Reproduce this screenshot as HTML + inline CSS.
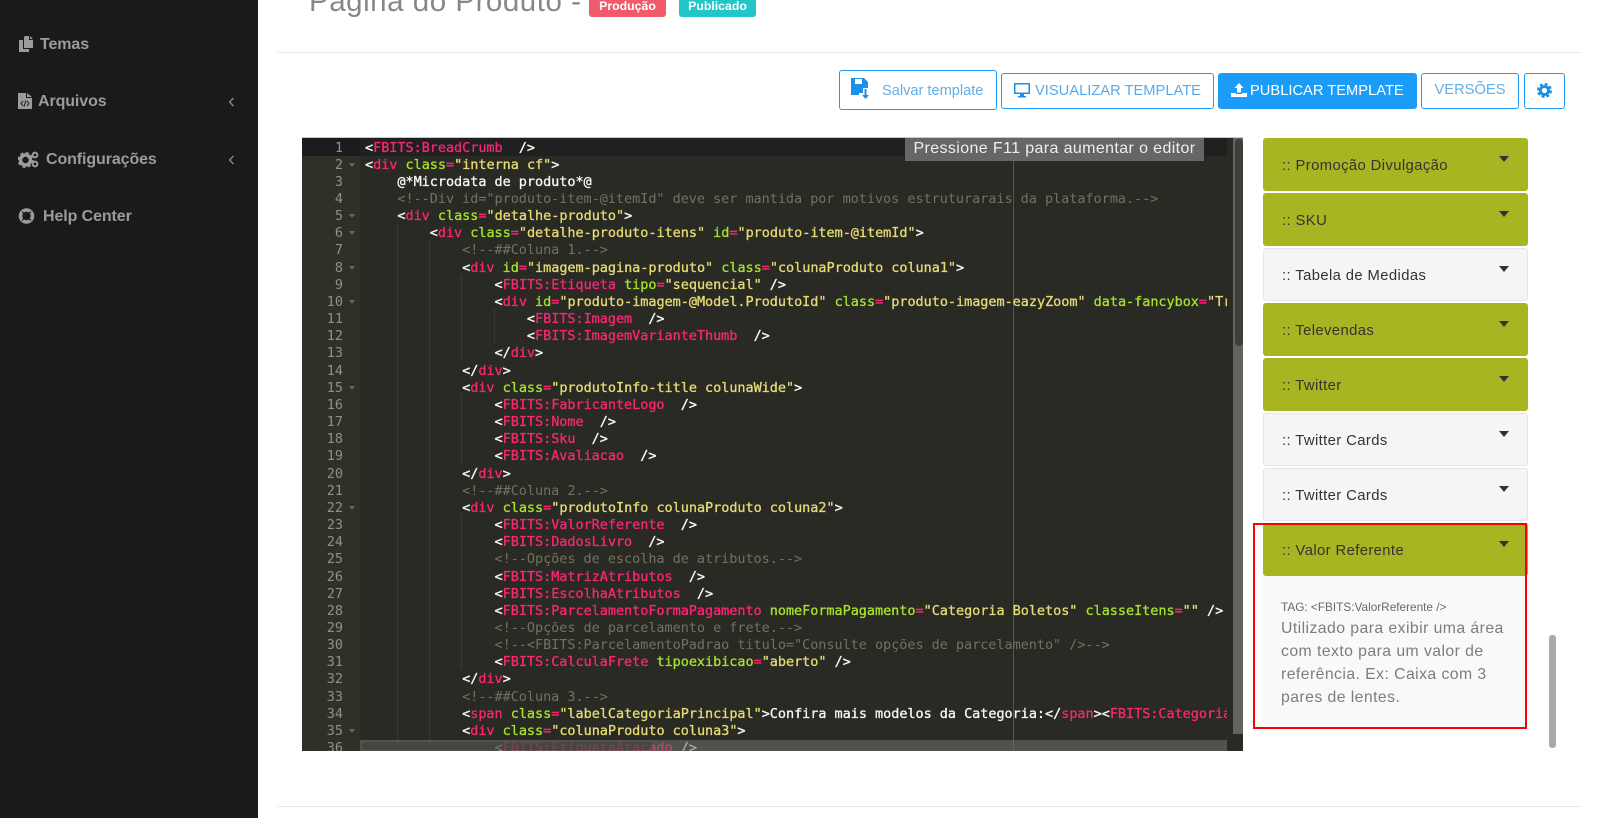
<!DOCTYPE html>
<html lang="pt-BR"><head><meta charset="utf-8"><title>Página do Produto</title>
<style>
*{box-sizing:border-box}
html,body{margin:0;width:1600px;height:818px;overflow:hidden;background:#fff;font-family:"Liberation Sans",sans-serif}
.a{position:absolute}
#side{left:0;top:0;width:258px;height:818px;background:#1a1a1a}
.nav{position:absolute;color:#9b9b9b;font:bold 16px/20px "Liberation Sans",sans-serif;letter-spacing:-.1px;white-space:nowrap}
.ic{position:absolute}
.hr{position:absolute;left:277px;width:1305px;height:1px;background:#e7eaec}
h1{position:absolute;margin:0;left:309px;top:-16px;font:300 29.5px/36px "Liberation Sans",sans-serif;color:#85888a;letter-spacing:.53px;white-space:nowrap}
.badge{position:absolute;top:-4px;height:21px;width:77px;border-radius:3px;color:#fff;font:bold 12.3px/20px "Liberation Sans",sans-serif;text-align:center}
.btn{position:absolute;border:1px solid #1c9cf6;border-radius:3px;color:#5aa9ea;background:#fff;font:14.7px/34px "Liberation Sans",sans-serif;white-space:nowrap}
#ed{left:302px;top:137px;width:941px;height:614px;background:#2a2a25;overflow:hidden;border-top:1px solid #c8c8c8}
#gut{left:0;top:0;width:58px;height:614px;background:#2f3129}
#act{left:0;top:0;width:925px;height:18px;background:#202020}
#actg{left:0;top:0;width:58px;height:18px;background:#1c1c1c}
.n{position:absolute;left:0;width:41px;margin-top:1.5px;text-align:right;color:#8f908a;font:13.5px/17.16px "DejaVu Sans Mono",monospace}
.f{position:absolute;left:47px;margin-top:1px;width:0;height:0;border-left:3.5px solid transparent;border-right:3.5px solid transparent;border-top:4px solid #66675f}
#code{left:63px;top:1.5px;width:862px;height:613px;overflow:hidden;font:13.5px/17.16px "DejaVu Sans Mono",monospace;letter-spacing:-.033px;color:#f8f8f2;-webkit-text-stroke:.3px currentColor}
.l{position:absolute;left:0;white-space:pre;height:17.16px}
.t{color:#f92672}.g{color:#a6e22e}.y{color:#e6db74}.c{color:#75715e;-webkit-text-stroke:0}.e{color:#f92672}
.gd{position:absolute;width:1px;border-left:1px dotted #45463f}
.p{position:absolute;left:1263px;width:265px;height:53px;border-radius:3px;font:14.8px/20px "Liberation Sans",sans-serif;letter-spacing:.4px;color:#333;white-space:nowrap}
.p span{position:absolute;left:19px;top:18px}
.p i{position:absolute;left:236px;top:18px;width:0;height:0;border-left:5px solid transparent;border-right:5px solid transparent;border-top:6px solid #333}
.o{background:#a8b522}
.w{background:#f5f5f5;border:1px solid #e5e6e7}
.w span{left:18px;top:17px}.w i{left:235px;top:17px}
</style></head><body>
<div id="side" class="a">
<svg class="ic" style="left:18px;top:36px" width="16" height="16" viewBox="0 0 16 16"><path fill="#9b9b9b" d="M7 0h4v4h4v8H6V1zM12 0l3 3h-3zM1 4h4v9h6v3H1z"/></svg>
<div class="nav" style="left:40px;top:35px">Temas</div>
<svg class="ic" style="left:18px;top:93px" width="14" height="16" viewBox="0 0 14 16"><path fill="#9b9b9b" d="M0 0h8v5h6v11H0zM9 0l5 4H9z"/><path fill="none" stroke="#1a1a1a" d="M5 8l-2 2.500 2 2.500M9 8l2 2.500-2 2.500M8 7.500l-2 6"/></svg>
<div class="nav" style="left:38px;top:92px">Arquivos</div>
<svg class="ic" style="left:228px;top:97px" width="7" height="10" viewBox="0 0 7 10"><path fill="none" stroke="#8a8a8a" stroke-width="1.300" d="M5.500 1L1.500 5l4 4"/></svg>
<svg class="ic" style="left:18px;top:151px" width="21" height="17" viewBox="0 0 21 17"><circle cx="7.500" cy="9" r="5" fill="none" stroke="#9b9b9b" stroke-width="3.500"/><circle cx="7.500" cy="9" r="7" fill="none" stroke="#9b9b9b" stroke-width="2" stroke-dasharray="3 2.500"/><circle cx="17" cy="4" r="2.400" fill="none" stroke="#9b9b9b" stroke-width="2"/><circle cx="17" cy="13" r="2.400" fill="none" stroke="#9b9b9b" stroke-width="2"/></svg>
<div class="nav" style="left:46px;top:150px">Configurações</div>
<svg class="ic" style="left:228px;top:155px" width="7" height="10" viewBox="0 0 7 10"><path fill="none" stroke="#8a8a8a" stroke-width="1.300" d="M5.500 1L1.500 5l4 4"/></svg>
<svg class="ic" style="left:18px;top:208px" width="17" height="16" viewBox="0 0 17 16"><circle cx="8.500" cy="8" r="6" fill="none" stroke="#9b9b9b" stroke-width="3.600"/><path stroke="#1a1a1a" stroke-width="1.200" d="M4 3.500l2.500 2.500M13 3.500L10.500 6M4 12.500L6.500 10M13 12.500L10.500 10"/></svg>
<div class="nav" style="left:43px;top:207px">Help Center</div>
</div>

<h1>Página do Produto -</h1>
<div class="badge" style="left:589px;background:#f05a6a">Produção</div>
<div class="badge" style="left:679px;background:#23c6c8">Publicado</div>
<div class="hr" style="top:52px"></div>
<div class="hr" style="top:806px"></div>

<div class="btn" style="left:839px;top:70px;width:158px;height:40px;font-size:14.6px;line-height:41px;padding-left:42px;color:#62aee8">Salvar template</div>
<svg class="ic" style="left:851px;top:78px" width="20" height="22" viewBox="0 0 20 22"><path fill="#1c8fe6" d="M0 0h13l4 4v6h-5v5H8v2H0zM4 1v5h7V1zM3 10h5v5H3z"/><path fill="#1c8fe6" d="M13.500 11h2v6h2.500l-3.500 4-3.500-4h2.500z"/></svg>
<div class="btn" style="left:1001px;top:73px;width:213px;height:36px;padding-left:33px">VISUALIZAR TEMPLATE</div>
<svg class="ic" style="left:1014px;top:83px" width="16" height="15" viewBox="0 0 16 15"><path fill="#1c8fe6" d="M0 0h16v11H10v2h2v1.500H4V13h2v-2H0zM1.500 1.500v8h13v-8z"/></svg>
<div class="btn" style="left:1218px;top:73px;width:199px;height:36px;padding-left:31px;background:#1a9cf8;color:#fff">PUBLICAR TEMPLATE</div>
<svg class="ic" style="left:1231px;top:83px" width="16" height="14" viewBox="0 0 16 14"><path fill="#fff" d="M8 0l4.500 5H10v4.500H6V5H3.500zM0 10h5v1h6v-1h5v4H0z"/></svg>
<div class="btn" style="left:1421px;top:73px;width:98px;height:36px;text-align:center;color:#62aee8;line-height:32px">VERSÕES</div>
<div class="btn" style="left:1524px;top:73px;width:41px;height:36px"></div>
<svg class="ic" style="left:1537px;top:83px" width="15" height="15" viewBox="0 0 16 16"><circle cx="8" cy="8" r="4.300" fill="none" stroke="#1c8fe6" stroke-width="3"/><circle cx="8" cy="8" r="6.500" fill="none" stroke="#1c8fe6" stroke-width="3" stroke-dasharray="3 2.100"/></svg>

<div id="ed" class="a">
<div id="gut" class="a"></div>
<div id="act" class="a"></div><div id="actg" class="a"></div>
<div class="n" style="top:0">1</div><div class="n" style="top:17.160px">2</div><div class="n" style="top:34.320px">3</div><div class="n" style="top:51.480px">4</div><div class="n" style="top:68.640px">5</div><div class="n" style="top:85.800px">6</div><div class="n" style="top:102.960px">7</div><div class="n" style="top:120.120px">8</div><div class="n" style="top:137.280px">9</div><div class="n" style="top:154.440px">10</div><div class="n" style="top:171.600px">11</div><div class="n" style="top:188.760px">12</div><div class="n" style="top:205.920px">13</div><div class="n" style="top:223.080px">14</div><div class="n" style="top:240.240px">15</div><div class="n" style="top:257.400px">16</div><div class="n" style="top:274.560px">17</div><div class="n" style="top:291.720px">18</div><div class="n" style="top:308.880px">19</div><div class="n" style="top:326.040px">20</div><div class="n" style="top:343.200px">21</div><div class="n" style="top:360.360px">22</div><div class="n" style="top:377.520px">23</div><div class="n" style="top:394.680px">24</div><div class="n" style="top:411.840px">25</div><div class="n" style="top:429px">26</div><div class="n" style="top:446.160px">27</div><div class="n" style="top:463.320px">28</div><div class="n" style="top:480.480px">29</div><div class="n" style="top:497.640px">30</div><div class="n" style="top:514.800px">31</div><div class="n" style="top:531.960px">32</div><div class="n" style="top:549.120px">33</div><div class="n" style="top:566.280px">34</div><div class="n" style="top:583.440px">35</div><div class="n" style="top:600.600px">36</div>
<div class="f" style="top:24px"></div><div class="f" style="top:75px"></div><div class="f" style="top:92px"></div><div class="f" style="top:127px"></div><div class="f" style="top:161px"></div><div class="f" style="top:247px"></div><div class="f" style="top:367px"></div><div class="f" style="top:590px"></div>
<div class="gd" style="left:95px;top:86px;height:528px"></div>
<div class="gd" style="left:127px;top:103px;height:511px"></div>
<div class="gd" style="left:159px;top:137px;height:85px"></div>
<div class="gd" style="left:159px;top:257px;height:68px"></div>
<div class="gd" style="left:159px;top:377px;height:154px"></div>
<div class="gd" style="left:192px;top:171px;height:34px"></div>
<div class="a" style="left:711px;top:0;width:1px;height:614px;background:#55564f"></div>
<div id="code" class="a">
<div class="l" style="top:0">&lt;<span class="t">FBITS:BreadCrumb</span>  /&gt;</div>
<div class="l" style="top:17.160px">&lt;<span class="t">div</span> <span class="g">class</span><span class="e">=</span><span class="y">"interna cf"</span>&gt;</div>
<div class="l" style="top:34.320px">    @*Microdata de produto*@</div>
<div class="l c" style="top:51.480px">    &lt;!--Div id="produto-item-@itemId" deve ser mantida por motivos estruturarais da plataforma.--&gt;</div>
<div class="l" style="top:68.640px">    &lt;<span class="t">div</span> <span class="g">class</span><span class="e">=</span><span class="y">"detalhe-produto"</span>&gt;</div>
<div class="l" style="top:85.800px">        &lt;<span class="t">div</span> <span class="g">class</span><span class="e">=</span><span class="y">"detalhe-produto-itens"</span> <span class="g">id</span><span class="e">=</span><span class="y">"produto-item-@itemId"</span>&gt;</div>
<div class="l c" style="top:102.960px">            &lt;!--##Coluna 1.--&gt;</div>
<div class="l" style="top:120.120px">            &lt;<span class="t">div</span> <span class="g">id</span><span class="e">=</span><span class="y">"imagem-pagina-produto"</span> <span class="g">class</span><span class="e">=</span><span class="y">"colunaProduto coluna1"</span>&gt;</div>
<div class="l" style="top:137.280px">                &lt;<span class="t">FBITS:Etiqueta</span> <span class="g">tipo</span><span class="e">=</span><span class="y">"sequencial"</span> /&gt;</div>
<div class="l" style="top:154.440px">                &lt;<span class="t">div</span> <span class="g">id</span><span class="e">=</span><span class="y">"produto-imagem-@Model.ProdutoId"</span> <span class="g">class</span><span class="e">=</span><span class="y">"produto-imagem-eazyZoom"</span> <span class="g">data-fancybox</span><span class="e">=</span><span class="y">"Tr</span></div>
<div class="l" style="top:171.600px">                    &lt;<span class="t">FBITS:Imagem</span>  /&gt;</div>
<div class="l" style="top:188.760px">                    &lt;<span class="t">FBITS:ImagemVarianteThumb</span>  /&gt;</div>
<div class="l" style="top:205.920px">                &lt;/<span class="t">div</span>&gt;</div>
<div class="l" style="top:223.080px">            &lt;/<span class="t">div</span>&gt;</div>
<div class="l" style="top:240.240px">            &lt;<span class="t">div</span> <span class="g">class</span><span class="e">=</span><span class="y">"produtoInfo-title colunaWide"</span>&gt;</div>
<div class="l" style="top:257.400px">                &lt;<span class="t">FBITS:FabricanteLogo</span>  /&gt;</div>
<div class="l" style="top:274.560px">                &lt;<span class="t">FBITS:Nome</span>  /&gt;</div>
<div class="l" style="top:291.720px">                &lt;<span class="t">FBITS:Sku</span>  /&gt;</div>
<div class="l" style="top:308.880px">                &lt;<span class="t">FBITS:Avaliacao</span>  /&gt;</div>
<div class="l" style="top:326.040px">            &lt;/<span class="t">div</span>&gt;</div>
<div class="l c" style="top:343.200px">            &lt;!--##Coluna 2.--&gt;</div>
<div class="l" style="top:360.360px">            &lt;<span class="t">div</span> <span class="g">class</span><span class="e">=</span><span class="y">"produtoInfo colunaProduto coluna2"</span>&gt;</div>
<div class="l" style="top:377.520px">                &lt;<span class="t">FBITS:ValorReferente</span>  /&gt;</div>
<div class="l" style="top:394.680px">                &lt;<span class="t">FBITS:DadosLivro</span>  /&gt;</div>
<div class="l c" style="top:411.840px">                &lt;!--Opções de escolha de atributos.--&gt;</div>
<div class="l" style="top:429px">                &lt;<span class="t">FBITS:MatrizAtributos</span>  /&gt;</div>
<div class="l" style="top:446.160px">                &lt;<span class="t">FBITS:EscolhaAtributos</span>  /&gt;</div>
<div class="l" style="top:463.320px">                &lt;<span class="t">FBITS:ParcelamentoFormaPagamento</span> <span class="g">nomeFormaPagamento</span><span class="e">=</span><span class="y">"Categoria Boletos"</span> <span class="g">classeItens</span><span class="e">=</span><span class="y">""</span> /&gt;</div>
<div class="l c" style="top:480.480px">                &lt;!--Opções de parcelamento e frete.--&gt;</div>
<div class="l c" style="top:497.640px">                &lt;!--&lt;FBITS:ParcelamentoPadrao titulo="Consulte opções de parcelamento" /&gt;--&gt;</div>
<div class="l" style="top:514.800px">                &lt;<span class="t">FBITS:CalculaFrete</span> <span class="g">tipoexibicao</span><span class="e">=</span><span class="y">"aberto"</span> /&gt;</div>
<div class="l" style="top:531.960px">            &lt;/<span class="t">div</span>&gt;</div>
<div class="l c" style="top:549.120px">            &lt;!--##Coluna 3.--&gt;</div>
<div class="l" style="top:566.280px">            &lt;<span class="t">span</span> <span class="g">class</span><span class="e">=</span><span class="y">"labelCategoriaPrincipal"</span>&gt;Confira mais modelos da Categoria:&lt;/<span class="t">span</span>&gt;&lt;<span class="t">FBITS:Categoria</span></div>
<div class="l" style="top:583.440px">            &lt;<span class="t">div</span> <span class="g">class</span><span class="e">=</span><span class="y">"colunaProduto coluna3"</span>&gt;</div>
<div class="l" style="top:600.600px">                &lt;<span class="t">FBITS:EtiquetaAtacado</span> /&gt;</div>
</div>
<div class="a" style="left:603px;top:0;width:299px;height:23px;background:#666;color:#eee;font:16px/22px 'Liberation Sans',sans-serif;text-align:center;letter-spacing:.38px;white-space:nowrap">Pressione F11 para aumentar o editor</div>
<div class="a" style="left:931px;top:0;width:10px;height:596px;background:#62635e"></div>
<div class="a" style="left:933px;top:1px;width:8px;height:207px;background:#3d3d39;border-radius:4px"></div>
<div class="a" style="left:58px;top:602px;width:867px;height:12px;background:rgba(110,110,105,.6)"></div>
<div class="a" style="left:60px;top:604px;width:290px;height:8px;background:rgba(60,60,56,.55);border-radius:4px"></div>
</div>

<div class="p o" style="top:138px"><span>:: Promoção Divulgação</span><i></i></div>
<div class="p o" style="top:193px"><span>:: SKU</span><i></i></div>
<div class="p w" style="top:248px"><span>:: Tabela de Medidas</span><i></i></div>
<div class="p o" style="top:303px"><span>:: Televendas</span><i></i></div>
<div class="p o" style="top:358px"><span>:: Twitter</span><i></i></div>
<div class="p w" style="top:413px"><span>:: Twitter Cards</span><i></i></div>
<div class="p w" style="top:468px"><span>:: Twitter Cards</span><i></i></div>
<div class="a" style="left:1263px;top:576px;width:262px;height:151px;background:#f9f9f9"></div>
<div class="p o" style="top:523px"><span>:: Valor Referente</span><i></i></div>
<div class="a" style="left:1281px;top:599px;color:#676a6c;font:11.8px/16px 'Liberation Sans',sans-serif;white-space:nowrap">TAG: &lt;FBITS:ValorReferente /&gt;</div>
<div class="a" style="left:1281px;top:617px;width:240px;color:#7b7e80;font:15.8px/23px 'Liberation Sans',sans-serif;letter-spacing:.43px;white-space:nowrap">Utilizado para exibir uma área<br>com texto para um valor de<br>referência. Ex: Caixa com 3<br>pares de lentes.</div>
<div class="a" style="left:1253px;top:523px;width:274px;height:206px;border:2px solid #f00"></div>
<div class="a" style="left:1549px;top:635px;width:7px;height:113px;background:#a9a9a9;border-radius:3px"></div>
</body></html>
